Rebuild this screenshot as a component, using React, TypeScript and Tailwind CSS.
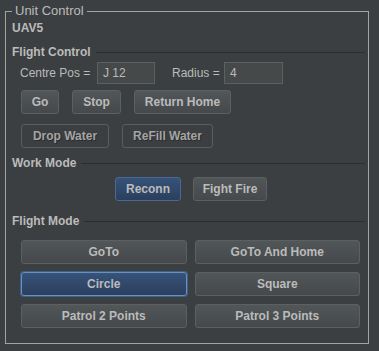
import React from "react";

const btn =
  "h-[24px] rounded-[3px] border border-[#5e6060] bg-gradient-to-b from-[#515658] to-[#45494b] text-[12px] font-bold text-[#bbbbbb] flex items-center justify-center";
const btnSelected =
  "h-[24px] rounded-[3px] border border-[#4a6890] bg-gradient-to-b from-[#36537a] to-[#2b3f5d] text-[12px] font-bold text-[#bbbbbb] flex items-center justify-center";
const btnDisabled =
  "h-[24px] rounded-[3px] border border-[#5a5d5f] bg-[#3c3f41] text-[12px] font-bold text-[#a4a4a4] [text-shadow:1px_1px_0_#2a2c2d] flex items-center justify-center";

function SectionHeader({ label, className }: { label: string; className: string }) {
  return (
    <div className={`flex items-center h-[14px] ${className}`}>
      <span className="font-bold text-[12px] leading-[14px] text-[#bbbbbb]">{label}</span>
      <div className="flex-1 ml-[5px] h-px bg-[#2b2d2e]" />
    </div>
  );
}

function Field({ value, width }: { value: string; width: string }) {
  return (
    <div
      className={`${width} h-[22px] border border-[#5e6060] bg-[#45494a] flex items-center px-[5px] text-[12px] text-[#bbbbbb]`}
    >
      {value}
    </div>
  );
}

export default function App() {
  return (
    <div
      className="w-[379px] h-[351px] bg-[#3c3f41] overflow-hidden pt-[4px]"
      style={{ fontFamily: '"Liberation Sans", Arial, sans-serif' }}
    >
      <fieldset className="ml-[5px] w-[364px] h-[340px] border border-[#a3a3a3] pl-[6px] pr-[3px]">
        <legend className="ml-[0px] px-[3px] text-[13px] leading-[14px] text-[#bbbbbb]">
          Unit Control
        </legend>

        <div className="mt-[3px] h-[14px] font-bold text-[12px] leading-[14px] text-[#bbbbbb]">UAV5</div>

        <SectionHeader label="Flight Control" className="mt-[10px]" />

        <div className="mt-[3px] flex items-center text-[12px] text-[#bbbbbb]">
          <span className="ml-[8px] w-[77px]">Centre Pos =</span>
          <Field value="J 12" width="w-[58px]" />
          <span className="ml-[17px] w-[52px]">Radius =</span>
          <Field value="4" width="w-[59px]" />
        </div>

        <div className="mt-[6px] ml-[9px] flex gap-[13px]">
          <div className={`${btn} w-[38px]`}>Go</div>
          <div className={`${btn} w-[49px]`}>Stop</div>
          <div className={`${btn} w-[97px]`}>Return Home</div>
        </div>

        <div className="mt-[10px] ml-[9px] flex gap-[13px]">
          <div className={`${btnDisabled} w-[88px]`}>Drop Water</div>
          <div className={`${btnDisabled} w-[91px]`}>ReFill Water</div>
        </div>

        <SectionHeader label="Work Mode" className="mt-[8px]" />

        <div className="mt-[7px] ml-[103px] flex gap-[12px]">
          <div className={`${btnSelected} w-[66px]`}>Reconn</div>
          <div className={`${btn} w-[74px]`}>Fight Fire</div>
        </div>

        <SectionHeader label="Flight Mode" className="mt-[13px]" />

        <div className="mt-[12px] ml-[9px] w-[339px] grid grid-cols-2 gap-x-[8px] gap-y-[8px]">
          <div className={btn}>GoTo</div>
          <div className={btn}>GoTo And Home</div>
          <div className={`${btnSelected} border-[#6a90c0] shadow-[0_0_0_1px_#3d5f8a]`}>Circle</div>
          <div className={btn}>Square</div>
          <div className={btn}>Patrol 2 Points</div>
          <div className={btn}>Patrol 3 Points</div>
        </div>
      </fieldset>
    </div>
  );
}
